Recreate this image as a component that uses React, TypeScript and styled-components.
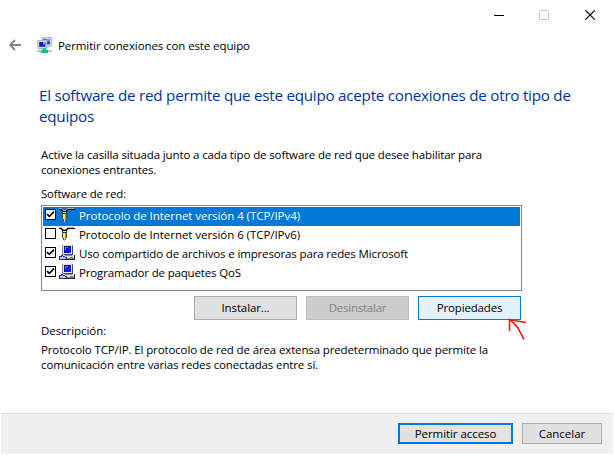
import React from "react";
import styled, { createGlobalStyle } from "styled-components";

const GlobalStyle = createGlobalStyle`
  * { box-sizing: border-box; }
  body { margin: 0; background: #fff; }
`;

const Dialog = styled.main`
  position: relative;
  display: flex;
  flex-direction: column;
  width: 614px;
  height: 455px;
  padding: 0 1px 1px;
  background: #fff;
  color: #000;
  font: 11.5px/15px "Open Sans", "Noto Sans", sans-serif;
`;

const CaptionBar = styled.div`
  display: flex;
  justify-content: flex-end;
  gap: 1px;
  height: 30px;
  padding-top: 10px;
`;

const CaptionButton = styled.button`
  display: flex;
  justify-content: center;
  width: 45px;
  height: 11px;
  padding: 0;
  border: 0;
  background: none;
`;

const Header = styled.header`
  display: flex;
  align-items: center;
  height: 30px;
  padding-left: 8px;
`;

const Text = styled.span<{ $track?: number }>`
  display: block;
  white-space: nowrap;
  letter-spacing: ${(p) => p.$track ?? 0}px;
`;

const WindowTitle = styled(Text)`
  margin-left: 6px;
`;

const BackArrow = styled.svg`
  margin-right: 15px;
`;

const Heading = styled.h1`
  margin: 25px 0 0 38px;
  color: #003399;
  font-size: 15.2px;
  font-weight: 400;
  line-height: 21px;
`;

const Content = styled.section`
  flex: 1;
  width: 481px;
  margin-left: 40px;
`;

const Paragraph = styled.div<{ $top: number }>`
  padding-top: ${(p) => p.$top}px;
`;

const List = styled.ul`
  height: 86px;
  margin: 4px 0 5px;
  padding: 1px;
  border: 1px solid #828790;
  list-style: none;
`;

const Item = styled.li<{ $selected?: boolean }>`
  display: flex;
  height: 19px;
  padding-left: 2px;
  background: ${(p) => (p.$selected ? "#0078d7" : "#fff")};
  color: ${(p) => (p.$selected ? "#fff" : "#000")};
`;

const CheckBox = styled.span`
  display: flex;
  width: 11px;
  height: 11px;
  margin: 2px 3px 0 0;
  border: 1px solid #000;
  background: #fff;
`;

const ItemLabel = styled(Text)`
  margin-left: 4px;
  line-height: 18px;
`;

const ButtonRow = styled.div`
  display: flex;
  justify-content: flex-end;
  gap: 9px;
  padding-right: 1px;
`;

const tones = {
  normal: "background: #e1e1e1; border: 1px solid #adadad; color: #000;",
  disabled: "background: #cccccc; border: 1px solid #bfbfbf; color: #838383;",
  hover: "background: #e5f1fb; border: 1px solid #0078d7; color: #000;",
  primary: "background: #e1e1e1; border: 2px solid #0078d7; color: #000;",
};

const Button = styled.button<{ $tone: keyof typeof tones; $w: number; $h: number }>`
  display: flex;
  align-items: center;
  justify-content: center;
  width: ${(p) => p.$w}px;
  height: ${(p) => p.$h}px;
  padding: 0 0 1px;
  font: inherit;
  ${(p) => tones[p.$tone]}
`;

const Footer = styled.footer`
  display: flex;
  justify-content: flex-end;
  gap: 9px;
  height: 41px;
  padding: 9px 11px 0 0;
  border-top: 1px solid #dfdfdf;
  background: #f0f0f0;
`;

const Pointer = styled.svg`
  position: absolute;
  left: 505px;
  top: 315px;
`;

const Check = () => (
  <svg width="9" height="9" viewBox="0 0 9 9">
    <path d="M1 4.1 3.4 6.4 8 1.7" fill="none" stroke="#000" strokeWidth="1.7" />
  </svg>
);

const ProtocolIcon = () => (
  <svg width="16" height="16" viewBox="0 0 16 16" shapeRendering="crispEdges">
    <path d="M0 2h3v1h1v1h3V3h1V2h8v1H9v1H8v1H3V4H2V3H0z" fill="#111" />
    <path d="M0 1h3v1h1v1h3V2h1V1h7v1H8v1H7v1H4V3H3V2H0z" fill="#a5a59c" />
    <path d="M3 5h5v2H3z" fill="#3c3c38" />
    <path d="M4 5h3v1H4z" fill="#dcdcdc" />
    <path d="M3 7h5v5H7v2H4v-2H3z" fill="#55521a" />
    <path d="M4 7h2v5H4z" fill="#efe877" />
    <path d="M6 7h1v6H6z" fill="#a69c31" />
    <path d="M5 12h1v3H5z" fill="#c9c9c4" />
  </svg>
);

const ServiceIcon = () => (
  <svg width="16" height="16" viewBox="0 0 16 16" shapeRendering="crispEdges">
    <path d="M3 0h11v10H3z" fill="#8a8a90" />
    <path d="M4 0h9v9H4z" fill="#e4e1de" />
    <path d="M5 1h7v7H5z" fill="#000a78" />
    <path d="M6 2h6v6H6z" fill="#0019f0" />
    <path d="M6 2h3v1H7v2H6z" fill="#4d83ff" />
    <path d="M13 1h1v9h-1zM5 9h8v1H5z" fill="#44444a" />
    <path d="M4 10h11v4H4z" fill="#dedbd7" />
    <path d="M15 10h1v5h-1zM5 14h10v1H5z" fill="#222" />
    <path d="M6 10h7v1H6zM6 13h9v1H6z" fill="#88888c" />
    <path d="M11 12h3v1h-3z" fill="#777" />
    <path d="M0 11h2v-1h2v1h2v1h2v2H6v1H0z" fill="#1a2c96" />
    <path d="M1 12h2v-1h1v1h2v1h1v1H1z" fill="#b9c6ee" />
  </svg>
);

const NetworkIcon = () => (
  <svg width="15" height="16" viewBox="0 0 15 16">
    <path d="M5 .5 14.5.3v8.2l-4 1.4H5z" fill="#d2d6db" stroke="#9ca2aa" strokeWidth=".7" />
    <path d="M6.5 2h6.3v5.3H6.5z" fill="#1533ce" />
    <path d="M9 2h3.8v2L9 5z" fill="#7e9cf5" />
    <path d="M.8 3.5 9.9 3v8.1l-3 .4H.8z" fill="#d8dbe0" stroke="#9298a1" strokeWidth=".7" />
    <path d="M2.2 5h6.2v4.8H2.2z" fill="#0825c2" />
    <path d="M5.8 5h2.6v2L6.5 8z" fill="#7597f4" />
    <path d="M0 13.2h15v2H0z" fill="#b8c2c5" />
    <path d="M6 11h3v1.8h2V16H4v-3.2h2z" fill="#18bd78" />
  </svg>
);

const items = [
  { label: "Protocolo de Internet versión 4 (TCP/IPv4)", track: -0.05, checked: true, selected: true, Icon: ProtocolIcon },
  { label: "Protocolo de Internet versión 6 (TCP/IPv6)", track: -0.05, checked: false, selected: false, Icon: ProtocolIcon },
  { label: "Uso compartido de archivos e impresoras para redes Microsoft", track: -0.143, checked: true, selected: false, Icon: ServiceIcon },
  { label: "Programador de paquetes QoS", track: -0.16, checked: true, selected: false, Icon: ServiceIcon },
];

export default function App() {
  return (
    <>
      <GlobalStyle />
      <Dialog>
        <CaptionBar>
          <CaptionButton aria-label="Minimizar">
            <svg width="11" height="11" shapeRendering="crispEdges"><path d="M1 5h10v1H1z" /></svg>
          </CaptionButton>
          <CaptionButton aria-label="Maximizar">
            <svg width="11" height="11"><path d="M.5.5h9v9h-9z" fill="none" stroke="#c8c8c8" /></svg>
          </CaptionButton>
          <CaptionButton aria-label="Cerrar">
            <svg width="11" height="11"><path d="m.4.3 9.4 9.4M9.8.3.4 9.7" stroke="#000" strokeWidth="1.2" /></svg>
          </CaptionButton>
        </CaptionBar>
        <Header>
          <BackArrow width="13" height="12" viewBox="0 0 13 12">
            <path d="M12 6H1.5M6 1 1 6l5 5" fill="none" stroke="#858585" strokeWidth="1.8" />
          </BackArrow>
          <NetworkIcon />
          <WindowTitle $track={-0.1}>Permitir conexiones con este equipo</WindowTitle>
        </Header>
        <Heading>
          <Text $track={-0.245}>El software de red permite que este equipo acepte conexiones de otro tipo de</Text>
          <Text $track={-0.25}>equipos</Text>
        </Heading>
        <Content>
          <Paragraph $top={20}>
            <Text $track={-0.126}>Active la casilla situada junto a cada tipo de software de red que desee habilitar para</Text>
            <Text $track={-0.16}>conexiones entrantes.</Text>
          </Paragraph>
          <Paragraph $top={9}>
            <Text $track={-0.21}>Software de red:</Text>
          </Paragraph>
          <List>
            {items.map(({ label, track, checked, selected, Icon }) => (
              <Item key={label} $selected={selected}>
                <CheckBox>{checked && <Check />}</CheckBox>
                <Icon />
                <ItemLabel $track={track}>{label}</ItemLabel>
              </Item>
            ))}
          </List>
          <ButtonRow>
            <Button $tone="normal" $w={103} $h={24}><Text $track={-0.12}>Instalar...</Text></Button>
            <Button $tone="disabled" $w={103} $h={24} disabled><Text $track={-0.23}>Desinstalar</Text></Button>
            <Button $tone="hover" $w={103} $h={24}><Text $track={-0.15}>Propiedades</Text></Button>
          </ButtonRow>
          <Paragraph $top={3}>
            <Text $track={-0.06}>Descripción:</Text>
          </Paragraph>
          <Paragraph $top={4}>
            <Text $track={-0.13}>Protocolo TCP/IP. El protocolo de red de área extensa predeterminado que permite la</Text>
            <Text $track={-0.13}>comunicación entre varias redes conectadas entre sí.</Text>
          </Paragraph>
        </Content>
        <Footer>
          <Button $tone="primary" $w={115} $h={21}><Text $track={-0.06}>Permitir acceso</Text></Button>
          <Button $tone="normal" $w={80} $h={21}><Text>Cancelar</Text></Button>
        </Footer>
        <Pointer width="24" height="27" viewBox="0 0 24 27" fill="none" stroke="#fb1212" strokeWidth="1.6">
          <path d="M21 7.5 12 6 4.5 4.5V16M4.5 4.5 9 8.5l4 4.5 2 4 4 7.5" />
        </Pointer>
      </Dialog>
    </>
  );
}
